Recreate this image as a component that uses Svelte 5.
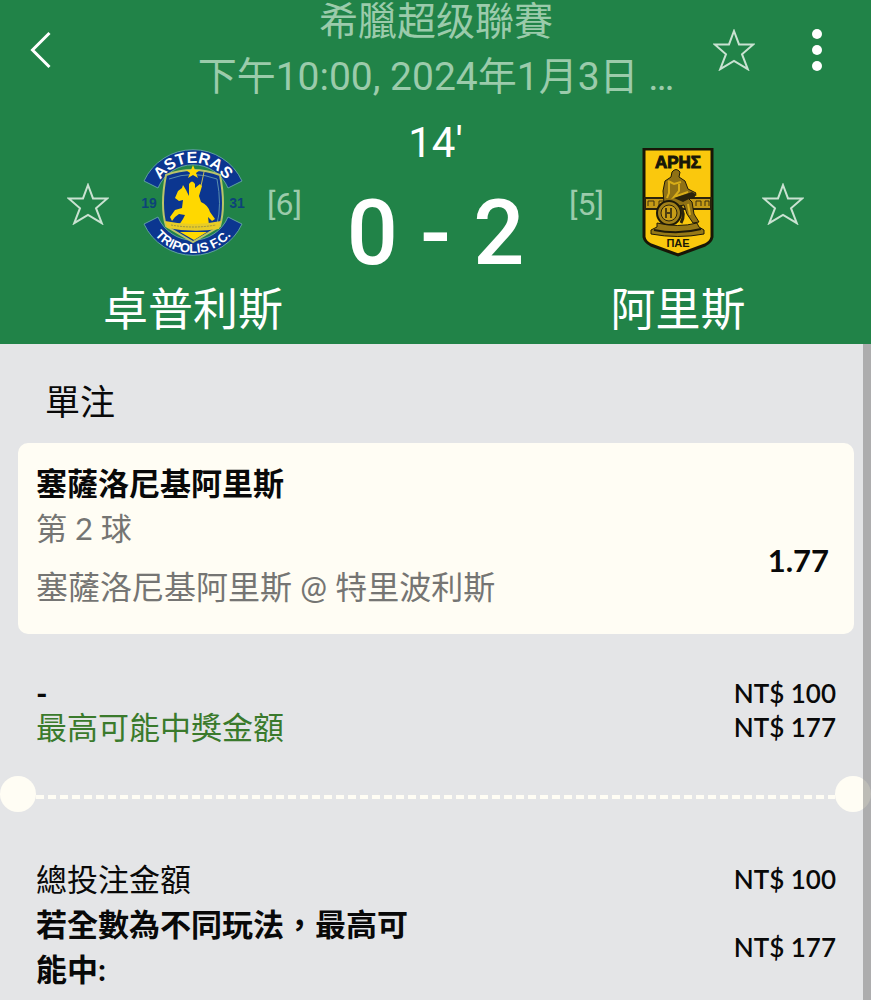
<script lang="ts">
  type Team = {
    name: string;
    rank: number;
    side: 'home' | 'away';
  };

  const league = '希臘超级聯賽';
  const kickoff = '下午10:00, 2024年1月3日 …';
  const home: Team = { name: '卓普利斯', rank: 6, side: 'home' };
  const away: Team = { name: '阿里斯', rank: 5, side: 'away' };
</script>

{#snippet star()}
  <svg class="star" viewBox="0 0 42 42" aria-hidden="true">
    <path d="M21 2 L26 15.4 H40.3 L29 25.2 L34.8 40.2 L21 32 L7.2 40.2 L13 25.2 L1.7 15.4 H16 Z" />
  </svg>
{/snippet}

{#snippet asterasCrest()}
  <svg class="crest" viewBox="0 0 104 112" role="img" aria-label="Asteras Tripolis F.C.">
    <defs>
      <path id="arc-top" d="M12 55 A40 40 0 0 1 92 55" />
      <path id="arc-bottom" d="M2 55 A50 50 0 0 0 102 55" />
    </defs>
    <path d="M3 33 A54 54 0 0 1 101 33 L87 40 A38 38 0 0 0 17 40 Z" fill="#0b3690" stroke="#5f9fa0" stroke-width="1" />
    <path d="M3 76 L17 69 A38 38 0 0 0 87 69 L101 76 A54 54 0 0 1 3 76 Z" fill="#0b3690" stroke="#5f9fa0" stroke-width="1" />
    <path d="M25 27 Q52 17 79 27 Q85 58 79 78 L52 94 L25 78 Q19 58 25 27 Z" fill="#0b3690" stroke="#b9c46a" stroke-width="2" />
    <path d="M28 31 Q52 22 76 31 Q81 57 76 76" fill="none" stroke="#5a8fae" stroke-width="1" />
    <path d="M52 17 L54 22 L59 22 L55 25 L57 30 L52 27 L47 30 L49 25 L45 22 L50 22 Z" fill="#ffd800" />
    <path
      d="M34 50 L37 43 L41 40 L42 37 L45 42 L48 48 L48 42 L48 36 Q51 31 54 36 L54 40 L59 36 L61 38 L58 48 L60 54 Q67 57 69 64 L74 71 L71 73 L67 69 L68 77 L38 77 L42 71 L44 67 L38 66 L34 69 L31 73 L29 69 L34 62 L41 60 L42 52 L38 53 Z"
      fill="#ffd800"
    />
    <path d="M60 38 L63 24" stroke="#c5ba55" stroke-width="1" />
    <path d="M24 73 Q52 79 80 73 L78 81 Q52 85 26 80 Z" fill="#e8cc26" />
    <path d="M30 77 Q52 81 75 77" fill="none" stroke="#9a9440" stroke-width="1" stroke-dasharray="2 1" />
    <path d="M39 84 H66 L53 92 Z" fill="#ffd800" />
    <text class="crest-word"><textPath href="#arc-top" startOffset="50%">ASTERAS</textPath></text>
    <text class="crest-word small"><textPath href="#arc-bottom" startOffset="50%">TRIPOLIS F.C.</textPath></text>
    <text class="crest-year" x="8" y="60">19</text>
    <text class="crest-year" x="96" y="60">31</text>
  </svg>
{/snippet}

{#snippet arisCrest()}
  <svg class="crest" viewBox="0 0 104 112" role="img" aria-label="ΑΡΗΣ ΠΑΕ">
    <path d="M18 1 H86 V89 Q85 94 79 97 L52 107 L25 97 Q19 94 18 89 Z" fill="#fac80d" stroke="#181607" stroke-width="3" />
    <path d="M19 50 H85 V61 H19 Z" fill="#c59a16" stroke="#2b240b" stroke-width="2" />
    <path d="M22 58 V53 H28 V58 M33 58 V53 H39 M70 58 V53 H75 V58 M79 58 V53 H83 V58" fill="none" stroke="#3c310c" stroke-width="1" />
    <path
      d="M46 24 Q50 19 54 24 L53 29 L59 33 L62 41 L70 45 L68 49 L60 48 L66 54 L68 66 L73 74 L67 75 L61 66 L58 57 L48 59 L38 55 L37 43 L39 33 L45 29 Z"
      fill="#8f7115"
      stroke="#1d1908"
      stroke-width="1"
    />
    <path d="M42 33 L48 36 L55 34 M43 33 L43 45 L41 50 M53 36 L53 43 L48 49 L62 44 M62 56 L64 67" fill="none" stroke="#d8ad18" stroke-width="2" />
    <path d="M48 50 L66 44 L71 47 L57 54 Z" fill="#2b240b" />
    <circle cx="43" cy="65" r="12" fill="#a18019" stroke="#1d1908" stroke-width="2" />
    <circle cx="43" cy="65" r="8" fill="#c79d18" stroke="#2b240b" stroke-width="1" />
    <path d="M40 60 V70 M45 60 V70 M40 65 H45" fill="none" stroke="#4b3d10" stroke-width="2" />
    <path d="M54 58 Q60 66 55 75" fill="none" stroke="#2b240b" stroke-width="3" />
    <path d="M31 75 Q52 80 71 75 L73 79 L78 82 V86 Q52 91 25 86 V82 L31 79 Z" fill="#977916" stroke="#1d1908" stroke-width="1" />
    <path d="M28 82 Q52 87 75 81" fill="none" stroke="#1d1908" stroke-width="2" />
    <text class="shield-name" x="52" y="20">ΑΡΗΣ</text>
    <text class="shield-sub" x="52" y="99">ΠΑΕ</text>
  </svg>
{/snippet}

{#snippet teamBlock(team: Team)}
  <div class="team {team.side}">
    <div class="team-row">
      <button class="icon-btn" type="button" aria-label="收藏{team.name}">{@render star()}</button>
      {#if team.side === 'home'}
        {@render asterasCrest()}
      {:else}
        {@render arisCrest()}
      {/if}
      <span class="rank">[{team.rank}]</span>
    </div>
    <h2>{team.name}</h2>
  </div>
{/snippet}

<div class="page">
  <header>
    <div class="topbar">
      <button class="icon-btn" type="button" aria-label="返回">
        <svg class="back" viewBox="0 0 22 38" aria-hidden="true"><path d="M19.500 2 L2.500 19 L19.500 36" /></svg>
      </button>
      <div class="title">
        <h1>{league}</h1>
        <p>{kickoff}</p>
      </div>
      <div class="actions">
        <button class="icon-btn" type="button" aria-label="收藏賽事">{@render star()}</button>
        <button class="icon-btn" type="button" aria-label="更多">
          <svg class="dots" viewBox="0 0 10 42" aria-hidden="true">
            <circle cx="5" cy="5" r="5" />
            <circle cx="5" cy="21" r="5" />
            <circle cx="5" cy="37" r="5" />
          </svg>
        </button>
      </div>
    </div>

    <div class="match">
      {@render teamBlock(home)}
      <div class="score">
        <span class="minute">14'</span>
        <strong>0 - 2</strong>
      </div>
      {@render teamBlock(away)}
    </div>
  </header>

  <main>
    <h3>單注</h3>

    <section class="bet">
      <div>
        <p class="pick">塞薩洛尼基阿里斯</p>
        <p class="market">第 2 球</p>
        <p class="fixture">塞薩洛尼基阿里斯 @ 特里波利斯</p>
      </div>
      <span class="odds">1.77</span>
    </section>

    <dl class="stake">
      <div><dt class="dash">-</dt><dd>NT$ 100</dd></div>
      <div class="win"><dt>最高可能中獎金額</dt><dd>NT$ 177</dd></div>
    </dl>

    <div class="tear"><i></i><svg aria-hidden="true"><line x1="0" y1="8" x2="100%" y2="8" /></svg><i></i></div>

    <dl class="total">
      <div><dt>總投注金額</dt><dd>NT$ 100</dd></div>
      <div class="max"><dt>若全數為不同玩法，最高可能中:</dt><dd>NT$ 177</dd></div>
    </dl>

    <div class="scrollbar"></div>
  </main>
</div>

<style>
  :global(body) {
    margin: 0;
    background: #e4e5e7;
  }
  .page {
    height: 100vh;
    overflow: hidden;
    display: flex;
    flex-direction: column;
    font-family: Roboto, 'Noto Sans CJK TC', sans-serif;
    color: #090909;
  }
  h1, h2, h3, p, dl, dt, dd {
    margin: 0;
    font-weight: 400;
  }
  .icon-btn {
    display: flex;
    padding: 0;
    border: 0;
    background: none;
    cursor: pointer;
  }

  /* header */
  header {
    background: #218348;
    color: #fff;
    padding-bottom: 3px;
  }
  .topbar {
    display: grid;
    grid-template-columns: 1fr auto 1fr;
    align-items: center;
    height: 100px;
    padding: 0 49px 0 30px;
  }
  .back {
    width: 22px;
    height: 38px;
    fill: none;
    stroke: #fff;
    stroke-width: 3;
  }
  .title {
    margin: -5px 0;
    padding-left: 20px;
    text-align: center;
    color: #9bcbab;
    white-space: nowrap;
  }
  .title h1,
  .title p {
    font-size: 39px;
    line-height: 55px;
  }
  .actions {
    display: flex;
    align-items: center;
    justify-content: flex-end;
    gap: 57px;
  }
  .star {
    width: 42px;
    height: 42px;
    fill: none;
    stroke: #c9e2d1;
    stroke-width: 2;
  }
  .dots {
    width: 10px;
    height: 42px;
    fill: #fff;
  }
  .match {
    display: flex;
    justify-content: space-between;
    padding: 0 67px;
  }
  .team {
    width: 252px;
    padding-top: 48px;
  }
  .team-row {
    display: flex;
    align-items: center;
  }
  .away .team-row {
    flex-direction: row-reverse;
  }
  .crest {
    width: 104px;
    height: 112px;
    margin: 0 22px 0 32px;
  }
  .away .crest {
    margin: 0 32px 0 22px;
  }
  .rank {
    flex: 1;
    font-size: 32px;
    color: #9bcbab;
  }
  .away .rank {
    text-align: right;
  }
  h2 {
    margin-top: 21px;
    font-size: 45px;
    line-height: 60px;
    text-align: center;
    white-space: nowrap;
  }
  .score {
    display: flex;
    flex-direction: column;
    align-items: center;
    padding-top: 20px;
    white-space: nowrap;
  }
  .minute {
    font-size: 42px;
    line-height: 46px;
  }
  .score strong {
    margin-top: 14px;
    font-size: 90px;
    line-height: 108px;
    font-weight: 500;
  }
  .crest-word {
    font: 700 16px 'Liberation Sans', sans-serif;
    fill: #fff;
    text-anchor: middle;
  }
  .small {
    font-size: 13px;
  }
  .crest-year {
    font: 700 14px 'Liberation Sans', sans-serif;
    fill: #0d4378;
    text-anchor: middle;
  }
  .shield-name {
    font: 700 17px 'Liberation Sans', sans-serif;
    fill: #181607;
    stroke: #181607;
    stroke-width: 1;
    text-anchor: middle;
  }
  .shield-sub {
    font: 700 11px 'Liberation Sans', sans-serif;
    fill: #181607;
    text-anchor: middle;
  }

  /* bet slip */
  main {
    position: relative;
    flex: 1;
    font-family: Lato, 'Noto Sans CJK TC', sans-serif;
    font-size: 31px;
    line-height: 45px;
  }
  h3 {
    padding: 33px 45px 18px;
    font-size: 35px;
    line-height: 48px;
  }
  .bet {
    display: flex;
    justify-content: space-between;
    align-items: center;
    margin: 0 17px 0 18px;
    padding: 18px 25px 25px 18px;
    border-radius: 10px;
    background: #fffdf4;
  }
  .pick {
    font-weight: 700;
  }
  .market,
  .fixture {
    color: #757573;
  }
  .fixture {
    margin-top: 13px;
    font-size: 32px;
  }
  .odds {
    padding-top: 50px;
    font-weight: 700;
  }
  dl {
    padding: 0 35px 0 36px;
  }
  dl div {
    display: flex;
    justify-content: space-between;
    align-items: center;
  }
  dd {
    font-size: 26px;
    font-weight: 600;
  }
  .stake {
    padding-top: 42px;
    line-height: 34px;
  }
  .dash {
    font-weight: 700;
  }
  .win dt {
    color: #3a7a2c;
  }
  .tear {
    display: flex;
    align-items: center;
    margin: 32px 0 45px;
  }
  .tear i {
    width: 36px;
    height: 36px;
    border-radius: 50%;
    background: #fffdf4;
  }
  .tear svg {
    flex: 1;
    height: 10px;
    stroke: #fffdf4;
    stroke-width: 4;
    stroke-dasharray: 8 4;
  }
  .max dt {
    width: 12em;
    font-weight: 700;
  }
  .scrollbar {
    position: absolute;
    inset: 0 0 0 auto;
    width: 8px;
    background: rgba(90, 90, 90, 0.4);
  }
</style>
